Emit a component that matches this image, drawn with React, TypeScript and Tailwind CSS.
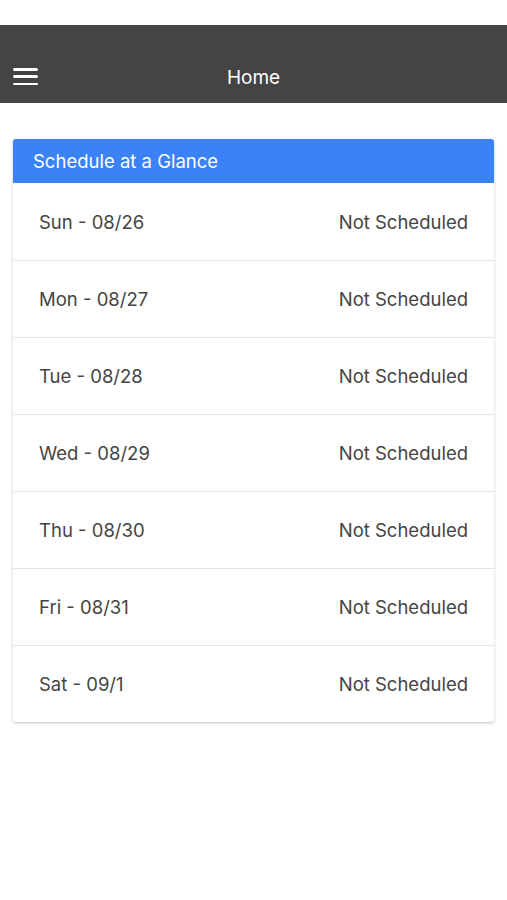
const days = [
  "Sun - 08/26",
  "Mon - 08/27",
  "Tue - 08/28",
  "Wed - 08/29",
  "Thu - 08/30",
  "Fri - 08/31",
  "Sat - 09/1",
];

export default function App() {
  return (
    <div className="min-h-[900px] bg-white font-['Inter','Liberation_Sans',sans-serif]">
      <div className="h-[25px]" />
      <header className="h-[78px] bg-[#444444] flex items-end pb-[12px] relative">
        <button className="ml-[13px] w-[25px] h-[17px] flex flex-col justify-between mb-[6px]">
          <span className="block h-[2.5px] w-full bg-white rounded" />
          <span className="block h-[2.5px] w-full bg-white rounded" />
          <span className="block h-[2.5px] w-full bg-white rounded" />
        </button>
        <h1 className="absolute left-0 right-0 bottom-[12px] text-center text-white text-[19px] leading-[26px]">
          Home
        </h1>
      </header>
      <div className="px-[13px] pt-[36px]">
        <div className="rounded-[3px] shadow-[0_1px_3px_rgba(0,0,0,0.25)] overflow-hidden">
          <div className="h-[44px] bg-[#3b82f6] flex items-center px-[20px] pt-[2px] text-white text-[18.5px]">
            Schedule at a Glance
          </div>
          {days.map((d, i) => (
            <div
              key={d}
              className={`h-[77px] flex items-center justify-between px-[26px] pt-[2px] text-[18.5px] text-[#444] ${i > 0 ? "border-t border-[#e5e5e5]" : ""}`}
            >
              <span>{d}</span>
              <span>Not Scheduled</span>
            </div>
          ))}
        </div>
      </div>
    </div>
  );
}
